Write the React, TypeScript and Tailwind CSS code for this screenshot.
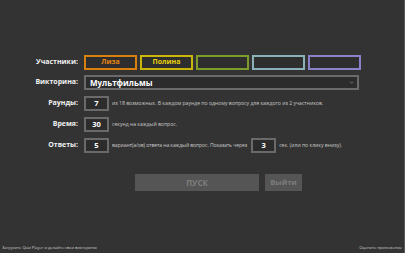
import React from "react";

const players = [
  { name: "Лиза", color: "border-[#d9800f] text-[#e8860f]" },
  { name: "Полина", color: "border-[#c8b70a] text-[#e6d20a]" },
  { name: "", color: "border-[#7d9c2c]" },
  { name: "", color: "border-[#8ab0b8]" },
  { name: "", color: "border-[#8a82c8]" },
];

const Label = ({ children }: { children: React.ReactNode }) => (
  <div className="w-[78px] shrink-0 text-right text-[7px] font-bold text-[#f0f0f0]">{children}</div>
);

const Box = ({ value, className = "" }: { value: string; className?: string }) => (
  <div
    className={`flex h-[15px] w-[25px] shrink-0 items-center justify-center border-2 border-[#6a6a6a] bg-[#2c2c2c] text-[7.5px] font-bold text-white ${className}`}
  >
    {value}
  </div>
);

export default function App() {
  return (
    <div
      className="relative flex h-[253px] w-[405px] flex-col overflow-hidden border-r border-[#5a5a5a] bg-[#333333] text-white"
      style={{ fontFamily: '"Open Sans", "Noto Sans", sans-serif' }}
    >
      <div className="flex flex-col pt-[55px]">
        {/* participants */}
        <div className="flex h-[15px] items-center gap-[6px]">
          <Label>Участники:</Label>
          <div className="flex gap-[3px]">
            {players.map((p, i) => (
              <div
                key={i}
                className={`flex h-[15px] w-[53px] items-center justify-center border-2 bg-[#2e2e2e] text-[7px] font-bold ${p.color}`}
              >
                {p.name}
              </div>
            ))}
          </div>
        </div>

        {/* quiz */}
        <div className="mt-[5px] flex h-[15px] items-center gap-[6px]">
          <Label>Викторина:</Label>
          <div className="flex h-[15px] w-[275px] items-center justify-between border-2 border-[#6a6a6a] bg-[#2c2c2c] pl-[4px] pr-[3px]">
            <span className="text-[8px] font-bold text-white">Мультфильмы</span>
            <svg width="5" height="5" viewBox="0 0 10 10" className="text-[#999]">
              <path d="M2 3.5 L5 6.5 L8 3.5" fill="none" stroke="currentColor" strokeWidth="1.4" />
            </svg>
          </div>
        </div>

        {/* rounds */}
        <div className="mt-[6px] flex h-[15px] items-center gap-[6px]">
          <Label>Раунды:</Label>
          <Box value="7" />
          <span className="ml-[-3px] text-[5.1px] text-[#c8c8c8]">
            из 18 возможных. В каждом раунде по одному вопросу для каждого из 2 участников.
          </span>
        </div>

        {/* time */}
        <div className="mt-[6px] flex h-[15px] items-center gap-[6px]">
          <Label>Время:</Label>
          <Box value="30" />
          <span className="ml-[-3px] text-[5.1px] text-[#c8c8c8]">секунд на каждый вопрос.</span>
        </div>

        {/* answers */}
        <div className="mt-[6px] flex h-[15px] items-center gap-[6px]">
          <Label>Ответы:</Label>
          <Box value="5" />
          <span className="ml-[-3px] text-[5.1px] tracking-[-0.1px] text-[#c8c8c8]">
            вариант(а/ов) ответа на каждый вопрос. Показать через
          </span>
          <Box value="3" className="ml-[-2px]" />
          <span className="ml-[-3px] text-[5.1px] text-[#c8c8c8]">сек. (или по клику внизу).</span>
        </div>

        {/* buttons */}
        <div className="mt-[21px] flex gap-[6px] pl-[135px]">
          <div className="flex h-[17px] w-[124px] items-center justify-center bg-[#555555] text-[8px] font-bold text-[#7d7d7d]">
            ПУСК
          </div>
          <div className="flex h-[17px] w-[37px] items-center justify-center bg-[#555555] text-[7.5px] font-bold text-[#7d7d7d]">
            Выйти
          </div>
        </div>
      </div>

      <div className="mt-auto flex items-end justify-between px-[2px] pb-[2px] text-[4px] text-[#cfcfcf]">
        <span>Загрузите Quiz Player и делайте свои викторины</span>
        <span>Оцените приложение</span>
      </div>
    </div>
  );
}
